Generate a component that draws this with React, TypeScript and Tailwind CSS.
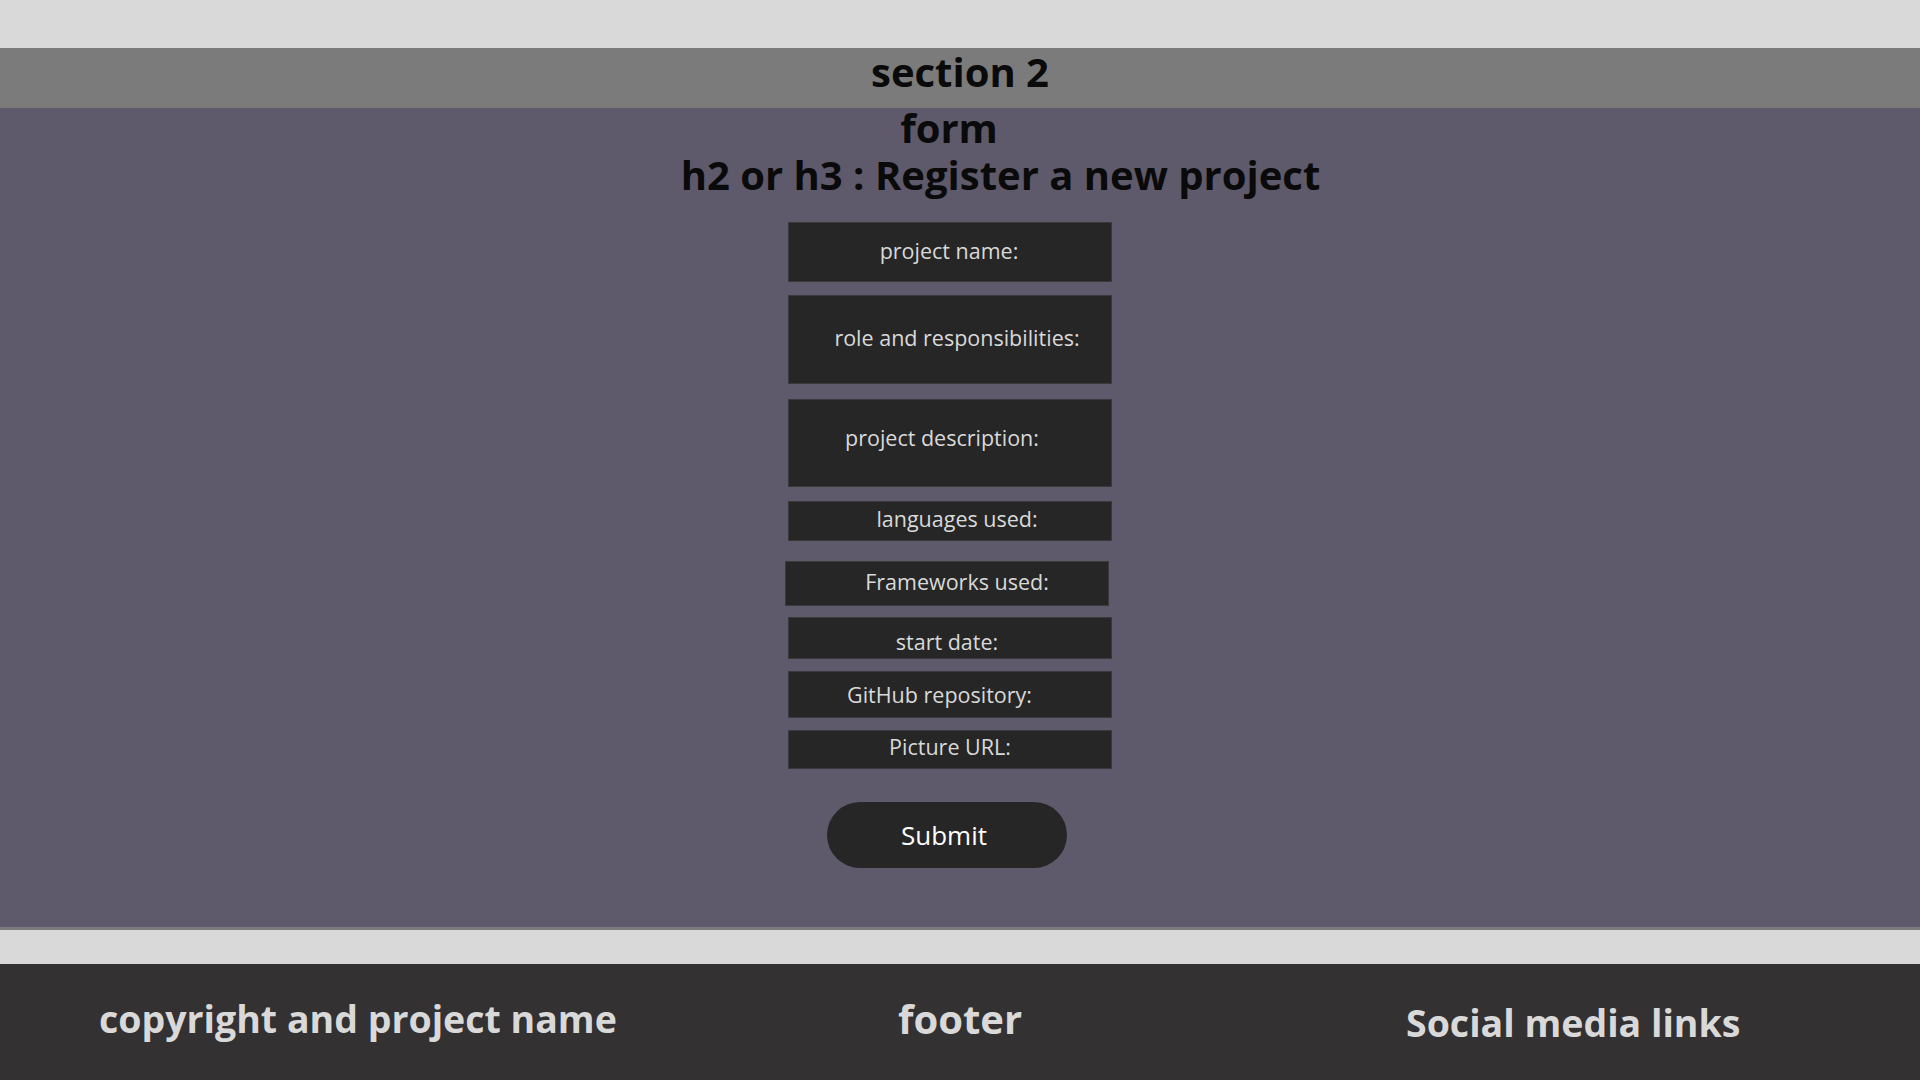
import React from "react";

const fields: { label: string; box: string; text: string }[] = [
  { label: "project name:", box: "ml-[-20px] mt-[114px] h-[60px] w-[324px]", text: "pr-[2px] pb-[2px]" },
  { label: "role and responsibilities:", box: "ml-[-20px] mt-[13px] h-[89px] w-[324px]", text: "pl-[14px] pb-[4px]" },
  { label: "project description:", box: "ml-[-20px] mt-[15px] h-[88px] w-[324px]", text: "pr-[16px] pb-[10px]" },
  { label: "languages used:", box: "ml-[-20px] mt-[14px] h-[40px] w-[324px]", text: "pl-[14px] pb-[4px]" },
  { label: "Frameworks used:", box: "ml-[-26px] mt-[20px] h-[45px] w-[324px]", text: "pl-[20px] pb-[4px]" },
  { label: "start date:", box: "ml-[-20px] mt-[11px] h-[42px] w-[324px]", text: "pt-[8px] pr-[6px]" },
  { label: "GitHub repository:", box: "ml-[-20px] mt-[12px] h-[47px] w-[324px]", text: "pr-[21px]" },
  { label: "Picture URL:", box: "ml-[-20px] mt-[12px] h-[39px] w-[324px]", text: "pb-[6px]" },
];

export default function App() {
  return (
    <div className="flex h-[1080px] w-[1920px] flex-col overflow-hidden bg-[#d9d9d9] font-['Open_Sans',sans-serif]">
      <div className="h-[48px] shrink-0" />
      <div className="flex h-[60px] shrink-0 items-center justify-center bg-[#7b7b7b] pb-[12px]">
        <h1 className="text-[40px] font-bold leading-none text-[#0a0a0a]">section 2</h1>
      </div>
      <main className="relative h-[819px] shrink-0 bg-[#5e5a6b]">
        <div className="absolute left-0 right-0 top-0 flex flex-col items-center">
          <h2 className="ml-[-22px] text-[40px] font-bold leading-none text-[#0a0a0a]">form</h2>
        </div>
        <div className="absolute left-0 right-0 top-[47px] flex flex-col items-center">
          <h3 className="ml-[81px] text-[40px] font-bold leading-none text-[#0a0a0a]">h2 or h3 : Register a new project</h3>
        </div>
        <form className="flex flex-col items-center">
          {fields.map((f) => (
            <div
              key={f.label}
              className={`flex shrink-0 items-center justify-center border border-[#3a3a3a] bg-[#262626] ${f.box}`}
            >
              <span className={`text-[21.5px] leading-none text-[#d9d9d9] ${f.text}`}>{f.label}</span>
            </div>
          ))}
          <button
            type="button"
            className="ml-[-26px] mt-[33px] flex h-[66px] w-[240px] items-center justify-center rounded-full bg-[#262626] text-[26px] text-white"
          >
            <span className="pr-[6px]">Submit</span>
          </button>
        </form>
      </main>
      <div className="h-[3px] shrink-0 bg-[#7b7b7b]" />
      <div className="h-[34px] shrink-0" />
      <footer className="grid h-[116px] shrink-0 grid-cols-3 items-center bg-[#333132] font-bold text-[#d9d9d9]">
        <div className="pb-[6px] pl-[99px] text-[37.5px]">copyright and project name</div>
        <div className="pb-[6px] text-center text-[40px]">footer</div>
        <div className="pl-[126px] pt-[2px] text-[37.5px]">Social media links</div>
      </footer>
    </div>
  );
}
